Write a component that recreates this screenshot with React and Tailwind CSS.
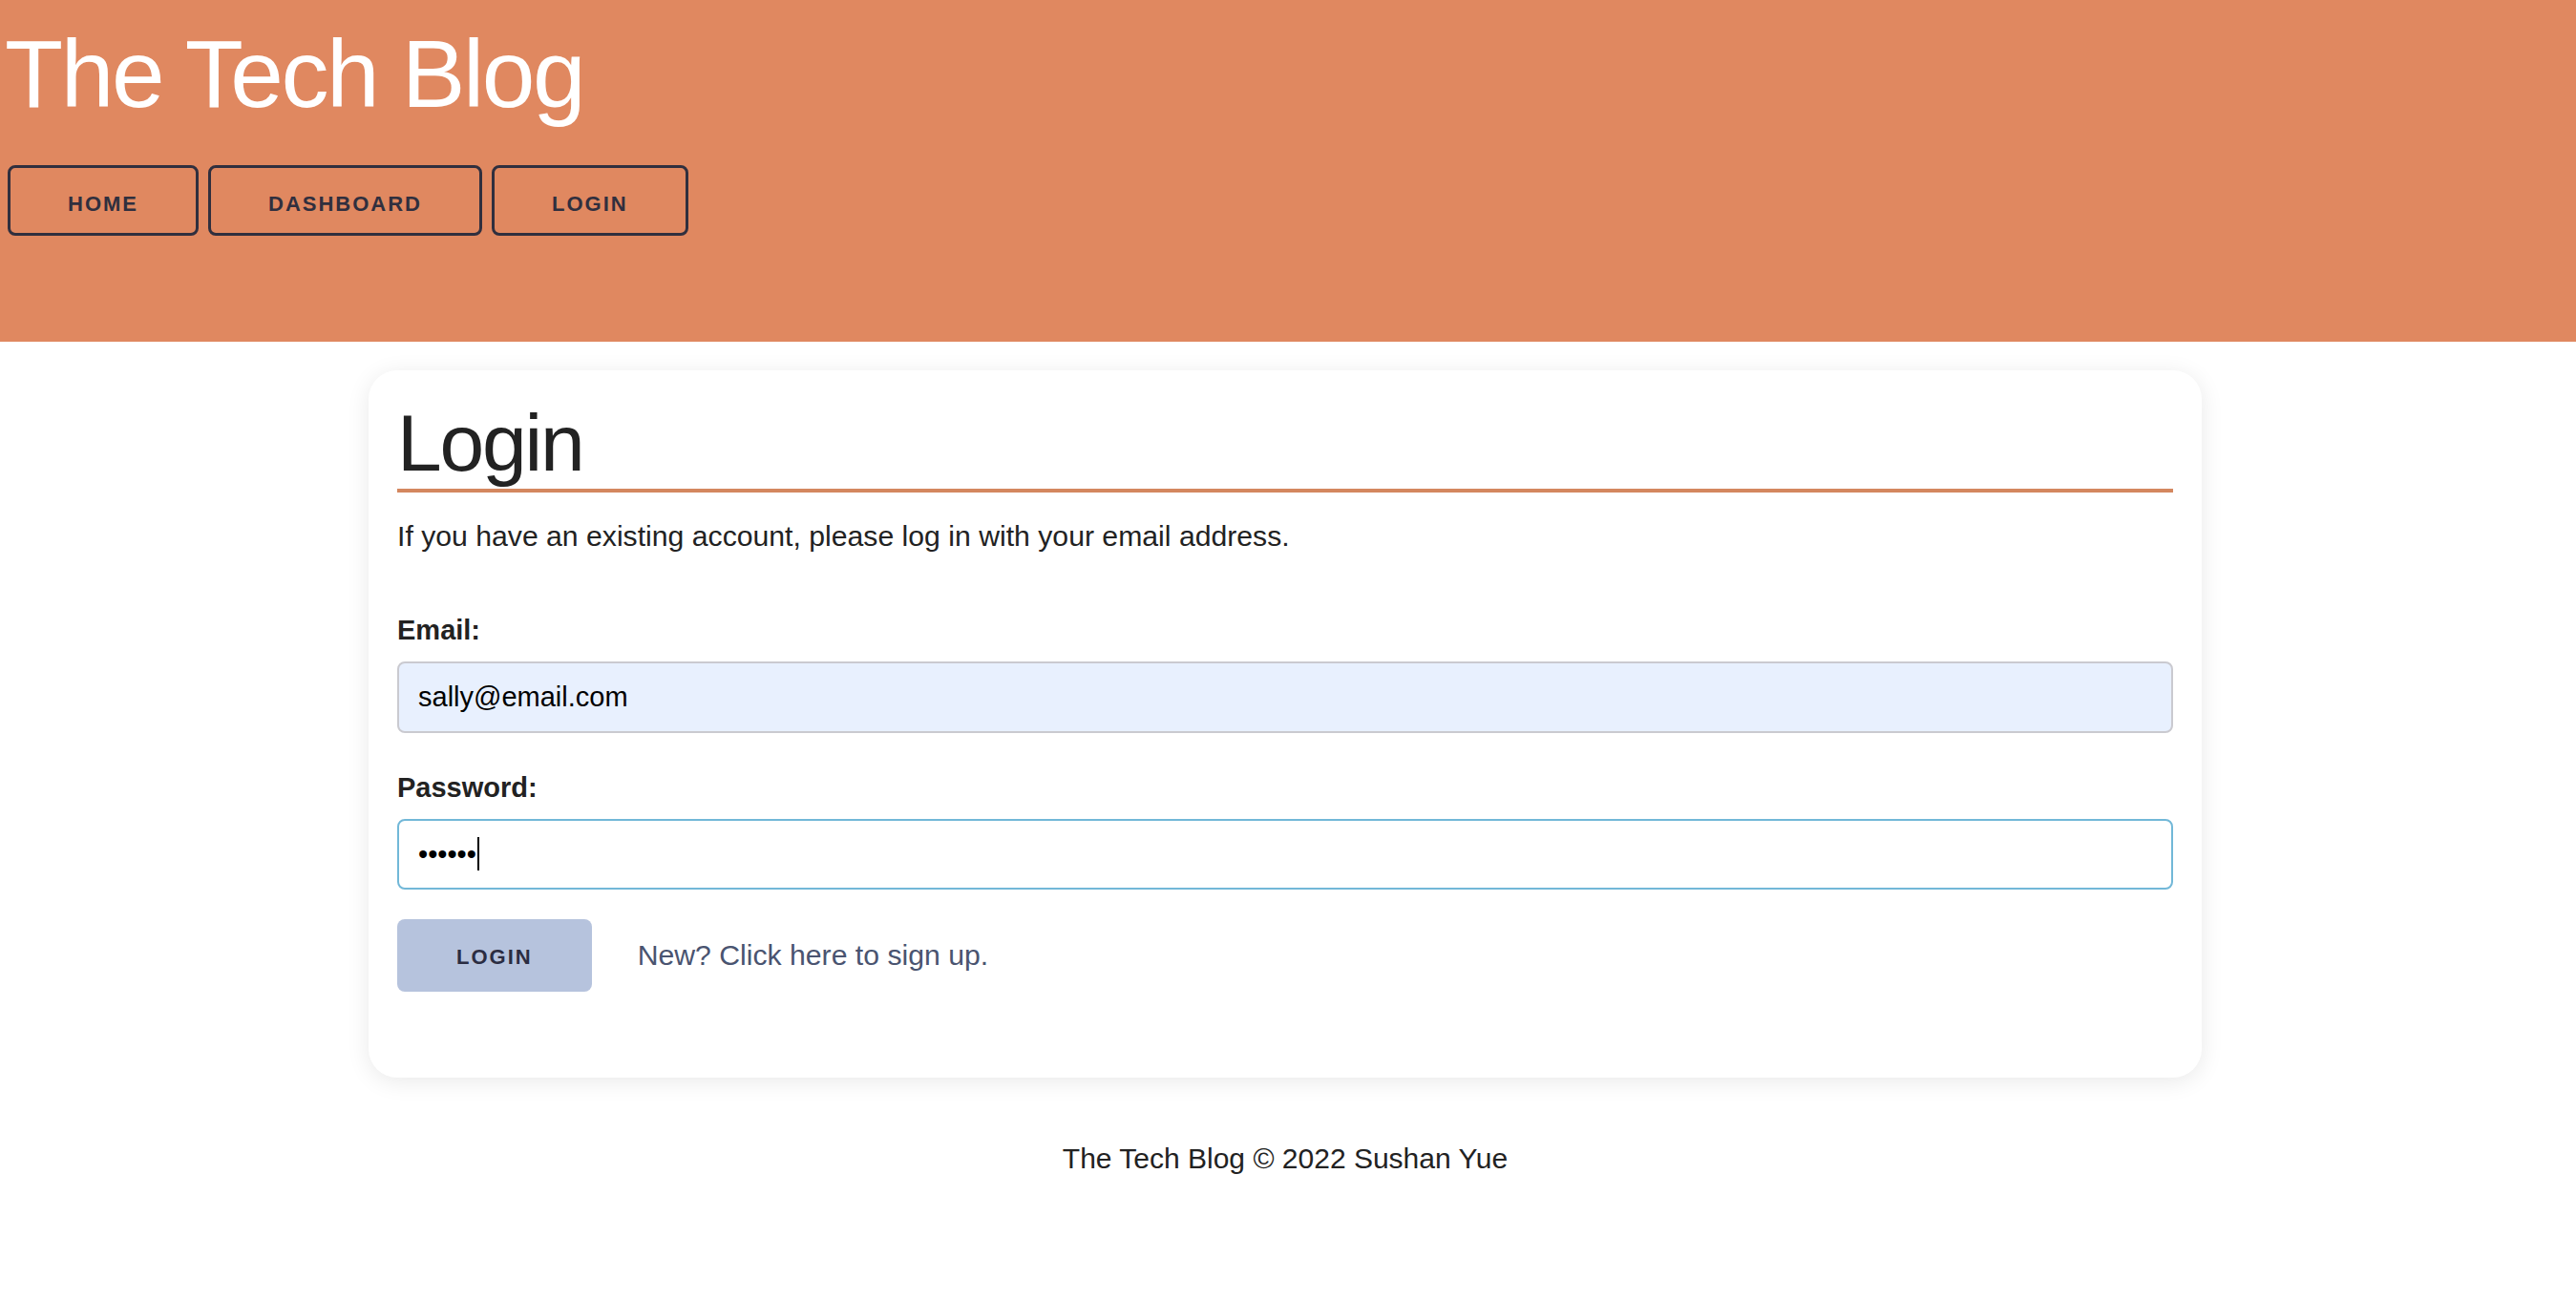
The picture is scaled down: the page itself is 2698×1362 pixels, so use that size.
import React, { useState } from "react";

const navLinks = ["Home", "Dashboard", "Login"];

export default function App() {
  const [email, setEmail] = useState("sally@email.com");
  const [password, setPassword] = useState("secret");

  return (
    <div className="min-h-screen bg-white font-['Liberation_Sans',Arial,sans-serif] text-[#222]">
      {/* Header */}
      <header className="h-[358px] bg-[#e08860] pt-[27px]">
        <h1 className="pl-[5px] text-[100px] leading-none tracking-[-2.4px] text-white">
          The Tech Blog
        </h1>
        <nav className="mt-[46px] flex gap-[10px] pl-[8px]">
          {navLinks.map((l) => (
            <a
              key={l}
              href="#"
              className="flex h-[74px] items-center rounded-[8px] border-[3px] border-[#302f3e] px-[60px] pt-[6px] text-[22px] font-bold uppercase tracking-[2px] text-[#302f3e]"
            >
              {l}
            </a>
          ))}
        </nav>
      </header>

      {/* Login card */}
      <main className="pt-[30px] pr-[6px]">
        <section className="mx-auto w-[1920px] rounded-[30px] bg-white px-[30px] pt-[34px] pb-[90px] shadow-[0_4px_24px_rgba(0,0,0,0.09)]">
          <h2 className="border-b-4 border-[#d4875f] pb-[6px] text-[84px] leading-none tracking-[-2.2px]">
            Login
          </h2>
          <p className="mt-[28px] text-[30.2px] leading-[36px]">
            If you have an existing account, please log in with your email address.
          </p>

          <form className="mt-[63px]" onSubmit={(e) => e.preventDefault()}>
            <label htmlFor="email" className="block text-[29px] font-bold leading-[35px]">
              Email:
            </label>
            <input
              id="email"
              type="email"
              value={email}
              onChange={(e) => setEmail(e.target.value)}
              className="mt-[15px] block h-[75px] w-full rounded-[8px] border-2 border-[#cacad0] bg-[#e8f0fe] px-[20px] text-[29px] text-black outline-none"
            />

            <label htmlFor="password" className="mt-[40px] block text-[29px] font-bold leading-[35px]">
              Password:
            </label>
            <div className="relative mt-[15px]">
              <input
                id="password"
                type="password"
                value={password}
                onChange={(e) => setPassword(e.target.value)}
                className="block h-[74px] w-full rounded-[8px] border-2 border-[#72b8d8] bg-white px-[20px] text-[29px] text-black outline-none"
              />
              {/* text caret */}
              <span className="pointer-events-none absolute left-[84px] top-[19px] h-[35px] w-[2px] bg-black" />
            </div>

            <div className="mt-[31px] flex items-center gap-[48px]">
              <button
                type="submit"
                className="h-[76px] rounded-[8px] bg-[#b6c3dd] px-[62px] pt-[3px] text-[22px] font-bold uppercase tracking-[2px] text-[#2b2d42]"
              >
                Login
              </button>
              <a href="#" className="text-[30.2px] text-[#4a5470]">
                New? Click here to sign up.
              </a>
            </div>
          </form>
        </section>
      </main>

      {/* Footer */}
      <footer className="mt-[67px] pr-[6px] text-center text-[30px] leading-[35px]">
        The Tech Blog © 2022 Sushan Yue
      </footer>
    </div>
  );
}
